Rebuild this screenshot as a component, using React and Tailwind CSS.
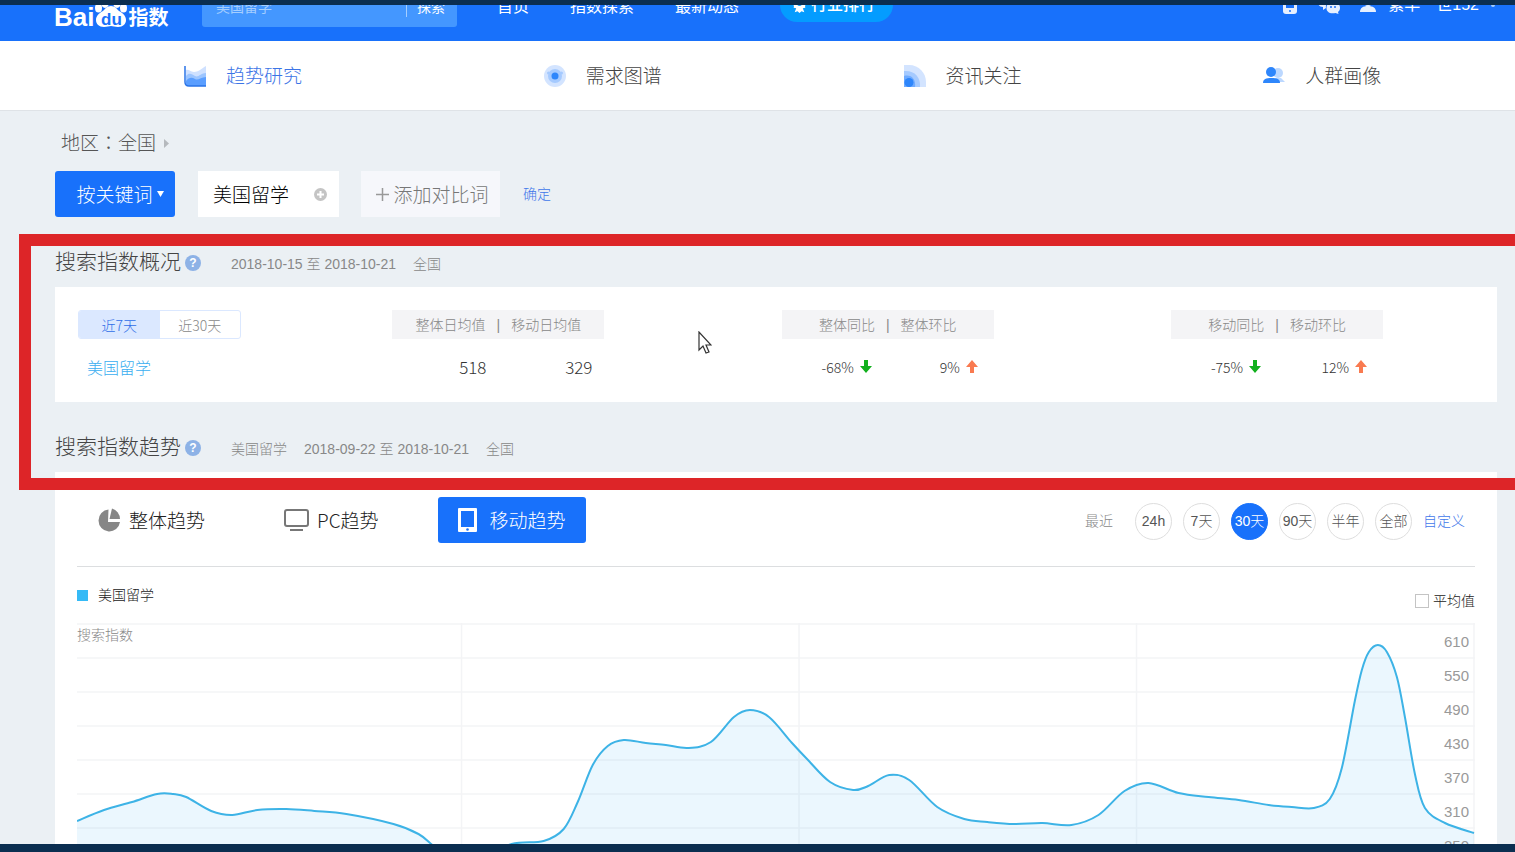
import { useState } from 'react'

const NAV_LINKS = ['首页', '指数探索', '最新动态']

const RANGES = ['24h', '7天', '30天', '90天', '半年', '全部']

const METRICS = [
  { labels: ['整体日均值', '移动日均值'], values: [{ text: '518' }, { text: '329' }] },
  { labels: ['整体同比', '整体环比'], values: [{ text: '-68%', dir: 'down' }, { text: '9%', dir: 'up' }] },
  { labels: ['移动同比', '移动环比'], values: [{ text: '-75%', dir: 'down' }, { text: '12%', dir: 'up' }] },
]

const AXIS = [610, 550, 490, 430, 370, 310, 250]

// curve points in plot units (1396 x 257)
const POINTS = [
  [0, 198], [27, 187], [55, 179], [80, 171], [96, 171], [109, 174], [134, 188], [155, 192],
  [180, 187], [209, 186], [237, 188], [269, 191], [316, 201], [341, 211], [356, 223], [376, 240],
  [400, 236], [434, 221], [466, 218], [486, 206], [500, 179], [515, 142], [530, 123], [546, 117],
  [568, 120], [588, 122], [610, 125], [633, 119], [656, 94], [672, 87], [691, 94], [714, 120],
  [729, 136], [752, 159], [775, 167], [790, 163], [811, 152], [831, 157], [859, 184], [886, 196],
  [909, 199], [936, 201], [964, 200], [993, 202], [1020, 192], [1046, 168], [1070, 160], [1100, 170],
  [1130, 174], [1160, 177], [1190, 182], [1213, 184], [1235, 185], [1251, 176], [1263, 145],
  [1276, 78], [1283, 47], [1290, 29], [1299, 22], [1308, 29], [1318, 54], [1326, 94], [1336, 151],
  [1346, 185], [1366, 200], [1395, 210],
]

function smooth(pts) {
  let d = `M${pts[0][0]} ${pts[0][1]}`
  for (let i = 0; i < pts.length - 1; i++) {
    const a = pts[i - 1] || pts[i]
    const b = pts[i]
    const c = pts[i + 1]
    const e = pts[i + 2] || c
    d += ` C${b[0] + (c[0] - a[0]) / 6} ${b[1] + (c[1] - a[1]) / 6} ${c[0] - (e[0] - b[0]) / 6} ${c[1] - (e[1] - b[1]) / 6} ${c[0]} ${c[1]}`
  }
  return d
}

function Logo() {
  return (
    <a href="#" aria-label="Bai du 指数" className="flex h-11 w-[116px] shrink-0 items-end text-white">
      <span className="text-[26px] leading-[20px] font-bold">Bai</span>
      <svg width="34" height="34" viewBox="0 0 34 34" className="shrink-0">
        <g fill="#fff">
          <ellipse cx="4.500" cy="15" rx="3.500" ry="4.500" />
          <ellipse cx="11" cy="9" rx="4" ry="6" />
          <ellipse cx="23" cy="9" rx="4" ry="6" />
          <ellipse cx="29.500" cy="15" rx="3.500" ry="4.500" />
          <path d="M17 13c4 0 6 3 8 5 4 2 7 5 7 9s-3 7-8 7c-3 0-5-1-7-1s-4 1-7 1c-5 0-8-3-8-7s3-7 7-9c2-2 4-5 8-5z" />
        </g>
        <text x="7" y="32" fontSize="17" fontWeight="700" fill="#1871fb" fontFamily="Liberation Sans">du</text>
      </svg>
      <span className="text-[20px] leading-[18px] font-bold">指数</span>
    </a>
  )
}

function Header() {
  return (
    <header className="-mt-9 flex h-[72px] shrink-0 items-center bg-[#1871fb] pr-5 pl-[54px] text-base font-normal text-white">
      <Logo />
      <form className="ml-8 flex h-11 w-[255px] shrink-0 items-center rounded-[3px] bg-[#4497ff] pt-1 text-sm">
        <input
          aria-label="搜索关键词"
          placeholder="美国留学"
          className="min-w-0 flex-1 bg-transparent pl-3.5 placeholder:text-[#a5ceff] focus:outline-none"
        />
        <button type="button" className="flex items-center pr-3">
          <span className="mr-2.5 h-5 w-px bg-[#a5ceff]" />
          探索
        </button>
      </form>
      <nav className="ml-10 flex items-center gap-[41px] whitespace-nowrap">
        {NAV_LINKS.map(l => <a key={l} href="#" className="pt-1">{l}</a>)}
        <a href="#" className="flex h-[34px] w-[113px] items-center gap-1 rounded-full bg-[#049cff] pl-3 font-medium">
          <svg width="15" height="16" viewBox="0 0 15 16" fill="#fff">
            <path d="M7.500 0l2 2 3-.5.3 3 2.200 2-2 2.300.3 2-2.500.5 1.500 4-2.800-1-2 1.700-2-1.700-2.800 1 1.500-4-2.500-.5.3-2-2-2.300 2.200-2 .3-3 3 .5z" />
            <circle cx="7.500" cy="6.500" r="2.500" fill="#049cff" />
          </svg>
          行业排行
        </a>
      </nav>
      <div className="ml-auto flex items-center whitespace-nowrap">
        <svg width="16" height="18" viewBox="0 0 16 18">
          <rect x="1" width="14" height="18" rx="3" fill="#e6f0ff" />
          <path d="M4 3h8v9H4z" fill="#1871fb" />
          <circle cx="8" cy="15" r="1" fill="#1871fb" />
        </svg>
        <svg width="22" height="18" viewBox="0 0 22 18" className="ml-5" fill="#e6f0ff">
          <path d="M8 0c5 0 8 3 8 6-5-1-9 2-8 6l-3 2v-3C2 11 0 9 0 7c0-4 3-7 8-7z" />
          <path d="M15 6c4 0 7 2 7 6 0 2-1 3-2 4l.500 2-3-1c-6 1-9-1-9-5s3-6 6.500-6z" />
          <circle cx="13" cy="11" r="1" fill="#1871fb" />
          <circle cx="17" cy="11" r="1" fill="#1871fb" />
        </svg>
        <svg width="16" height="14" viewBox="0 0 16 14" className="ml-5 mr-3" fill="#e6f0ff">
          <circle cx="8" cy="4" r="4" />
          <path d="M0 14c0-4 3-6 8-6s8 2 8 6z" />
        </svg>
        <button type="button" className="flex items-center">
          <span>繁华</span>
          <span className="ml-4">世152</span>
          <span className="ml-3 size-1 rounded-full bg-[#a5ceff]" />
        </button>
      </div>
    </header>
  )
}

const TrendIcon = () => (
  <svg width="22" height="22" viewBox="0 0 22 22">
    <path d="M2 5c3-1 4 2 8 2s7-3 12-6v20H5c-2 0-3-1-3-3z" fill="#cfe1ff" />
    <path d="M2 11c3-4 6-2 9 0s6-3 11-3v13H5c-2 0-3-1-3-3z" fill="#9cc5ff" />
    <path d="M2 16c3-4 6-4 9-2s6-2 11-2v9H5c-2 0-3-1-3-3z" fill="#5a9eff" />
    <path d="M1 1v16c0 3 1 4 4 4h17" fill="none" stroke="#2a74e8" strokeWidth="1.500" />
  </svg>
)

const DemandIcon = () => (
  <svg width="22" height="22" viewBox="0 0 22 22">
    <circle cx="11" cy="11" r="11" fill="#d3e4ff" />
    <circle cx="11" cy="11" r="7" fill="#a5caff" />
    <circle cx="4.500" cy="8" r="1.500" fill="#a5caff" />
    <circle cx="17.500" cy="8" r="1.500" fill="#a5caff" />
    <circle cx="11" cy="11" r="3.500" fill="#2e86fb" />
  </svg>
)

const NewsIcon = () => (
  <svg width="22" height="22" viewBox="0 0 22 22">
    <path d="M0 0h5c10 0 17 8 17 17v5H0z" fill="#d3e4ff" />
    <path d="M0 6c10-1 17 6 16 16H0z" fill="#a5caff" />
    <path d="M0 11c7-2 12 3 11 11H0z" fill="#6fabff" />
    <circle cx="5" cy="17.500" r="4.500" fill="#2e86fb" />
  </svg>
)

const CrowdIcon = () => (
  <svg width="22" height="22" viewBox="0 0 22 22">
    <circle cx="15" cy="8" r="5" fill="#bcd8ff" />
    <path d="M12 13h6l4 4h-8z" fill="#bcd8ff" />
    <circle cx="8" cy="7" r="5" fill="#2e86fb" />
    <path d="M0 18c0-4 3-5 8.500-5s8.500 1 8.500 5z" fill="#2e86fb" />
  </svg>
)

const SECTIONS = [
  { label: '趋势研究', Icon: TrendIcon, active: true },
  { label: '需求图谱', Icon: DemandIcon },
  { label: '资讯关注', Icon: NewsIcon },
  { label: '人群画像', Icon: CrowdIcon },
]

function SectionNav() {
  return (
    <nav className="grid h-[70px] shrink-0 grid-cols-4 border-b border-[#dfe3e7] bg-white pr-[22px] pl-[54px]">
      {SECTIONS.map(({ label, Icon, active }) => (
        <a
          key={label}
          href="#"
          className={`flex items-center gap-5 pl-[130px] text-[19px] whitespace-nowrap ${active ? 'text-[#3c74e6]' : 'text-[#444]'}`}>
          <Icon />
          <span className="pt-1">{label}</span>
        </a>
      ))}
    </nav>
  )
}

function SectionTitle({ title, meta }) {
  return (
    <div className="mt-[30px] mb-2.5 flex h-[30px] items-center whitespace-nowrap">
      <h2 className="text-[21px] text-[#444]">{title}</h2>
      <button
        type="button"
        aria-label="帮助"
        className="mt-0.5 ml-1 flex size-4 items-center justify-center rounded-full bg-[#8db2e6] text-xs font-bold text-white">
        ?
      </button>
      <p className="ml-[30px] flex gap-[17px] pt-1 text-sm text-[#888]">
        {meta.map(m => <span key={m}>{m}</span>)}
      </p>
    </div>
  )
}

function Arrow({ dir }) {
  return (
    <svg width="12" height="13" viewBox="0 0 12 13" className="ml-1.5">
      {dir === 'down'
        ? <path d="M4 0h4v6h4l-6 7-6-7h4z" fill="#12b01e" />
        : <path d="M4 13h4V7h4L6 0 0 7h4z" fill="#f97a50" />}
    </svg>
  )
}

function Overview() {
  const [period, setPeriod] = useState('近7天')
  return (
    <section className="bg-white pt-[23px] pb-2">
      <table className="w-full table-fixed">
        <thead>
          <tr>
            <th className="w-[23.4%] p-0 pl-[23px] text-left font-light">
              <div className="flex h-[29px] w-[163px] overflow-hidden rounded-[3px] border border-[#dbe8ff] font-['Noto_Sans_CJK_SC',sans-serif] text-sm">
                {['近7天', '近30天'].map(p => (
                  <button
                    key={p}
                    type="button"
                    onClick={() => setPeriod(p)}
                    className={`flex-1 ${p === period ? 'bg-[#dbe8ff] text-[#2f6fe8]' : 'text-[#888]'}`}>
                    {p}
                  </button>
                ))}
              </div>
            </th>
            {METRICS.map((m, i) => (
              <th key={m.labels[0]} className={`p-0 font-light ${i < 2 ? 'w-[27%]' : ''}`}>
                <div className="flex h-[29px] w-[212px] items-center justify-center gap-[11px] bg-[#f4f4f6] text-sm text-[#888]">
                  <span>{m.labels[0]}</span>
                  <span>|</span>
                  <span>{m.labels[1]}</span>
                </div>
              </th>
            ))}
          </tr>
        </thead>
        <tbody>
          <tr className="h-[55px]">
            <th className="p-0 pt-1 pl-8 text-left text-base font-light text-[#3aaef0]">美国留学</th>
            {METRICS.map(m => (
              <td key={m.labels[0]} className="p-0">
                <div className="flex w-[212px] font-['Noto_Sans_CJK_SC',sans-serif] text-[#333]">
                  {m.values.map(v => (
                    <span
                      key={v.text}
                      className={`flex flex-1 items-center justify-end ${v.dir ? 'pr-4 text-sm' : 'pr-3 text-[17px]'}`}>
                      {v.text}
                      {v.dir && <Arrow dir={v.dir} />}
                    </span>
                  ))}
                </div>
              </td>
            ))}
          </tr>
        </tbody>
      </table>
    </section>
  )
}

const PieIcon = () => (
  <svg width="24" height="24" viewBox="0 0 24 24" fill="#868686">
    <path d="M11.500 1.500A10.800 11 0 1 0 23 14H11z" />
    <path d="M15 0.500a11 11 0 0 1 8 10.500H12.500z" />
  </svg>
)

const PcIcon = () => (
  <svg width="25" height="24" viewBox="0 0 25 24" fill="none" stroke="#777" strokeWidth="2">
    <rect x="1" y="2" width="23" height="16" rx="2" />
    <path d="M6 22h13" />
  </svg>
)

const MobileIcon = () => (
  <svg width="24" height="24" viewBox="0 0 24 24">
    <path d="M1 0h17a1 1 0 0 1 1 1v22a1 1 0 0 1-1 1H1a1 1 0 0 1-1-1V1a1 1 0 0 1 1-1zM3 3v16h13V3z" fill="#fff" fillRule="evenodd" />
    <circle cx="9.500" cy="21.500" r="1.300" fill="#1871fb" />
  </svg>
)

const TABS = [
  { label: '整体趋势', Icon: PieIcon },
  { label: 'PC趋势', Icon: PcIcon },
  { label: '移动趋势', Icon: MobileIcon },
]

function TrendChart() {
  const line = smooth(POINTS)
  return (
    <div className="relative">
      <svg viewBox="0 0 1396 257" preserveAspectRatio="none" className="block h-[257px] w-full">
        <g stroke="#f3f4f6" strokeWidth="1.500">
          {AXIS.map((v, i) => <path key={v} d={`M0 ${i * 34 + 1}H1396`} />)}
          {[384, 721, 1058, 1395].map(x => <path key={x} d={`M${x} 0V257`} />)}
        </g>
        <path d={`${line} V257 H0 Z`} fill="#38b4f5" fillOpacity="0.100" />
        <path d={line} fill="none" stroke="#3db3e6" strokeWidth="2" />
      </svg>
      <span className="absolute top-0.5 left-0 text-sm text-[#888]">搜索指数</span>
      <div className="absolute top-0.5 right-1.5 text-right text-[15px] text-[#999]">
        {AXIS.map(v => <div key={v} className="h-[34px] leading-[34px]">{v}</div>)}
      </div>
    </div>
  )
}

function TrendPanel() {
  const [tab, setTab] = useState('移动趋势')
  const [range, setRange] = useState('30天')
  return (
    <section className="bg-white px-[22px] pt-[25px]">
      <div className="flex items-center justify-between border-b border-[#dcdee0] pb-[23px] whitespace-nowrap">
        <div className="flex gap-[39px]">
          {TABS.map(({ label, Icon }) => (
            <button
              key={label}
              type="button"
              onClick={() => setTab(label)}
              className={`flex h-[46px] items-center gap-2 rounded-[3px] px-5 font-['Noto_Sans_CJK_SC',sans-serif] text-[19px] ${label === tab ? 'bg-[#1871fb] text-white' : 'text-[#222]'}`}>
              <Icon />
              {label}
            </button>
          ))}
        </div>
        <div className="flex items-center gap-[11px] pt-0.5 pr-2.5 text-sm">
          <span className="mr-[11px] text-[#888]">最近</span>
          {RANGES.map(r => (
            <button
              key={r}
              type="button"
              onClick={() => setRange(r)}
              className={`size-[37px] rounded-full border ${r === range ? 'border-[#1871fb] bg-[#1871fb] text-white' : 'border-[#dedede] text-[#555]'}`}>
              {r}
            </button>
          ))}
          <a href="#" className="text-[#3f78ea]">自定义</a>
        </div>
      </div>
      <div className="flex h-14 items-center justify-between text-sm text-[#222]">
        <span className="flex items-center gap-2.5">
          <i className="size-[11px] bg-[#35baf6]" />
          美国留学
        </span>
        <label className="flex items-center gap-1 pt-3">
          <input type="checkbox" className="size-3.5 appearance-none border border-[#c4c4c4] bg-white checked:bg-[#1871fb]" />
          平均值
        </label>
      </div>
      <TrendChart />
    </section>
  )
}

export default function App() {
  return (
    <div className="flex h-screen flex-col bg-[#0b2e50] pt-[5px] pb-2 font-['Liberation_Sans','Noto_Sans_CJK_SC',sans-serif] font-light">
      <div className="flex min-h-0 flex-1 flex-col overflow-hidden bg-[#ebf0f4]">
        <Header />
        <SectionNav />
        <main className="relative shrink-0 pt-[18px] pr-[18px] pl-[55px]">
          <button type="button" className="flex h-7 items-center pl-1.5 text-[19px] text-[#555]">
            <span>地区<span className="font-['Noto_Sans_CJK_TC',sans-serif]">：</span>全国</span>
            <svg width="5" height="9" viewBox="0 0 5 9" className="ml-2" fill="#b5b9bd"><path d="M0 0l5 4.500L0 9z" /></svg>
          </button>
          <div className="mt-3.5 flex items-center text-[19px] whitespace-nowrap">
            <button type="button" className="flex h-[46px] w-[120px] items-center justify-center gap-1 rounded-[3px] bg-[#1871fb] pl-2.5 text-white">
              <span className="pt-1">按关键词</span>
              <svg width="7" height="6" viewBox="0 0 7 6" fill="#fff"><path d="M0 0h7L3.500 6z" /></svg>
            </button>
            <div className="ml-[23px] flex h-[46px] w-[141px] items-center bg-white pr-3 pl-[15px]">
              <input aria-label="关键词" defaultValue="美国留学" className="min-w-0 flex-1 pt-1 text-black focus:outline-none" />
              <button type="button" aria-label="添加">
                <svg width="13" height="13" viewBox="0 0 13 13">
                  <circle cx="6.500" cy="6.500" r="6.500" fill="#c4c4c4" />
                  <path d="M6.500 3v7M3 6.500h7" stroke="#fff" strokeWidth="2" />
                </svg>
              </button>
            </div>
            <button type="button" className="ml-[22px] flex h-[46px] w-[139px] items-center justify-center gap-1 bg-[#f6f7fb] pl-1 text-[#777]">
              <svg width="13" height="13" viewBox="0 0 13 13" stroke="#999" strokeWidth="1.500"><path d="M6.500 0v13M0 6.500h13" /></svg>
              <span className="pt-1">添加对比词</span>
            </button>
            <a href="#" className="ml-[23px] text-sm text-[#3f78ea]">确定</a>
          </div>

          <SectionTitle title="搜索指数概况" meta={['2018-10-15 至 2018-10-21', '全国']} />
          <Overview />
          <SectionTitle title="搜索指数趋势" meta={['美国留学', '2018-09-22 至 2018-10-21', '全国']} />
          <TrendPanel />

          {/* highlight frame runs off the right edge */}
          <div className="pointer-events-none absolute top-[123px] right-0 left-[19px] h-[256px] border-y-[12px] border-l-[12px] border-[#dd2528]" />
          <svg width="14" height="23" viewBox="0 0 14 23" className="pointer-events-none absolute top-[220px] left-[698px]">
            <path d="M1 1v18l4-4 3 7 3-1-3-7h5z" fill="#fff" stroke="#333" strokeWidth="1.200" />
          </svg>
        </main>
      </div>
    </div>
  )
}
